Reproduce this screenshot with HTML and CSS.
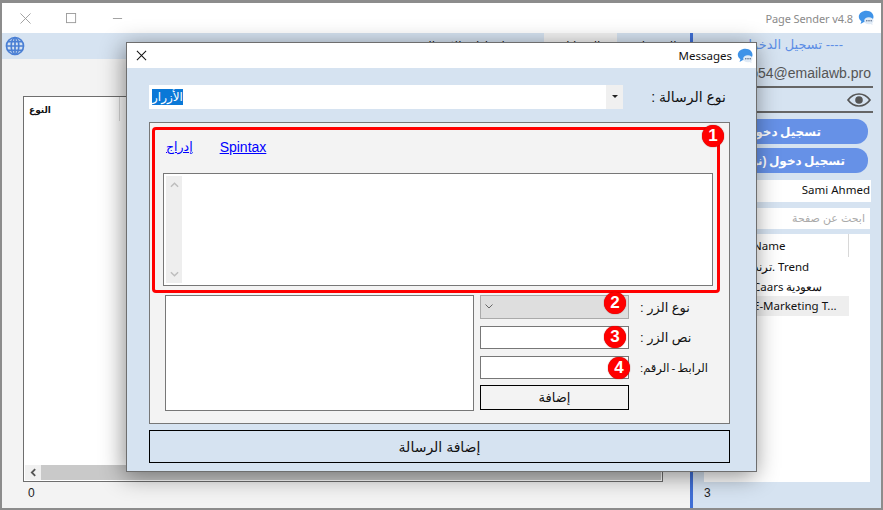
FILE: index.html
```html
<!DOCTYPE html>
<html lang="ar">
<head>
<meta charset="utf-8">
<title>Page Sender</title>
<link rel="stylesheet" href="styles.css">
</head>
<body>
<svg class="defs" width="0" height="0" aria-hidden="true">
  <symbol id="chat" viewBox="0 0 16 16">
    <path d="M8.500 .8C4.300 .8 .8 3.400 .8 6.800c0 1.800 1 3.400 2.600 4.500L2.500 14l3.500-1.900c.8.200 1.600.300 2.500.300 4.200 0 7-2.500 7-5.600S12.700 .8 8.500 .8z" fill="#3f93e8"/>
    <path d="M10.800 7.300c-2.600 0-4.600 1.500-4.600 3.500s2 3.400 4.600 3.400c.5 0 1-.1 1.500-.2l2.400 1.100-.5-2.100c.8-.6 1.300-1.400 1.300-2.200 0-2-2-3.500-4.700-3.500z" fill="#dfeaf6"/>
    <circle cx="8.800" cy="10.800" r=".8" fill="#5d6f8a"/><circle cx="11" cy="10.800" r=".8" fill="#5d6f8a"/><circle cx="13.200" cy="10.800" r=".8" fill="#5d6f8a"/>
  </symbol>
</svg>
<div class="app">
  <header class="titlebar">
    <div class="controls">
      <svg class="ctl" viewBox="0 0 12 12"><path d="M.5.500l11 11M11.500.500l-11 11" stroke="#9a9a9a" fill="none"/></svg>
      <svg class="ctl" viewBox="0 0 12 12"><rect x=".5" y=".5" width="10" height="10" stroke="#9a9a9a" fill="none"/></svg>
      <svg class="ctl" viewBox="0 0 12 12"><path d="M1 6h10" stroke="#9a9a9a" fill="none"/></svg>
    </div>
    <div class="apptitle"><span>Page Sender v4.8</span><svg class="chat"><use href="#chat"/></svg></div>
  </header>
  <div class="main">
    <section class="left">
      <div class="strip">
        <svg class="globe" viewBox="0 0 20 20"><g fill="none" stroke="#4a7fd4" stroke-width="1.700"><circle cx="10" cy="10" r="8.500"/><ellipse cx="10" cy="10" rx="3.800" ry="8.500"/><path d="M10 1.500v17M1.500 10h17M2.800 5.700h14.400M2.800 14.300h14.400"/></g></svg>
        <div class="tabs">
          <span class="tab">إعدادات الإرسال</span>
          <span class="tab active">الرسائل</span>
          <span class="tab">الصفحات</span>
        </div>
      </div>
      <div class="content">
        <div class="table">
          <div class="thead"><span class="th">النوع</span></div>
          <div class="tbody"></div>
          <div class="hscroll"><span class="arrow"><svg viewBox="0 0 8 8"><path d="M5.500 1L2.500 4l3 3" fill="none" stroke="#555" stroke-width="1.600"/></svg></span></div>
        </div>
        <div class="count count-left">0</div>
      </div>
    </section>
    <div class="divider"></div>
    <aside class="right">
      <div class="login-link">---- تسجيل الدخول</div>
      <div class="email">sp54@emailawb.pro</div>
      <div class="pass">
        <svg class="eye" viewBox="0 0 24 14"><path d="M1 7c3-4 7-6 11-6s8 2 11 6c-3 4-7 6-11 6S4 11 1 7z" fill="none" stroke="#555" stroke-width="1.700"/><circle cx="12" cy="7" r="3.800" fill="#555"/></svg>
      </div>
      <button class="pill pill-a">تسجيل دخول</button>
      <button class="pill pill-b">تسجيل دخول (نوع)</button>
      <div class="userbox">Sami Ahmed</div>
      <div class="searchbox">ابحث عن صفحة</div>
      <div class="pagelist">
        <div class="plhead"><span>Name</span></div>
        <div class="plrow">ترند. Trend</div>
        <div class="plrow">Caars سعودية</div>
        <div class="plrow sel">E-Marketing T...</div>
      </div>
      <div class="count">3</div>
    </aside>
  </div>

  <div class="modal">
    <div class="mtitle">
      <svg class="mclose" viewBox="0 0 12 12"><path d="M1 1l10 10M11 1L1 11" stroke="#111" stroke-width="1.100" fill="none"/></svg>
      <div class="mname"><span>Messages</span><svg class="chat"><use href="#chat"/></svg></div>
    </div>
    <div class="mbody">
      <div class="typerow">
        <div class="combo">
          <span class="seltext">الأزرار</span>
          <span class="combo-btn"></span>
        </div>
        <label class="typelabel">نوع الرسالة :</label>
      </div>
      <div class="group">
        <div class="redframe">
          <span class="badge b1">1</span>
          <div class="links"><a class="link-ar" href="#">إدراج</a><a href="#">Spintax</a></div>
          <div class="textarea">
            <div class="vscroll">
              <svg viewBox="0 0 10 6"><path d="M1 5l4-4 4 4" fill="none" stroke="#bdbdbd" stroke-width="1.600"/></svg>
              <svg viewBox="0 0 10 6"><path d="M1 1l4 4 4-4" fill="none" stroke="#bdbdbd" stroke-width="1.600"/></svg>
            </div>
          </div>
        </div>
        <div class="btnform">
          <div class="listbox"></div>
          <div class="fields">
            <div class="field"><div class="input disabled"><svg class="chev" viewBox="0 0 8 5"><path d="M.5.500L4 4 7.500.500" fill="none" stroke="#666"/></svg><span class="badge b2">2</span></div><label>نوع الزر :</label></div>
            <div class="field"><div class="input"><span class="badge b3">3</span></div><label>نص الزر :</label></div>
            <div class="field"><div class="input"><span class="badge b4">4</span></div><label class="label-tight">الرابط - الرقم:</label></div>
            <div class="field"><button class="addbtn">إضافة</button></div>
          </div>
        </div>
      </div>
      <button class="addmsg">إضافة الرسالة</button>
    </div>
  </div>
</div>
</body>
</html>
```
FILE: styles.css
```css
* { box-sizing: border-box; }
html, body { margin: 0; padding: 0; background: #fff; }
body { font-family: "Liberation Sans", "DejaVu Sans", sans-serif; color: #111; overflow: hidden; }
.defs { position: absolute; }
.app {
  position: relative; width: 883px; height: 510px; display: flex; flex-direction: column;
  border: 2px solid #8c8c8c; border-top-width: 3px; background: #f3f3f3; overflow: hidden;
}
.titlebar { height: 30px; flex: none; background: #fff; display: flex; justify-content: space-between; align-items: center; }
.controls { display: flex; align-items: center; gap: 35px; padding-left: 18px; }
.ctl { width: 11px; height: 11px; display: block; }
.apptitle { display: flex; align-items: center; gap: 5px; padding-right: 7px; font: 11px "Noto Sans", sans-serif; color: #8a8a8a; letter-spacing: -.1px; }
.chat { width: 16px; height: 16px; display: block; }
.main { flex: 1; display: flex; min-height: 0; }
.left { width: 688px; flex: none; display: flex; flex-direction: column; background: #f3f3f3; }
.strip { height: 26px; flex: none; background: #d6e3f1; display: flex; justify-content: space-between; align-items: center; padding-left: 3px; }
.globe { width: 20px; height: 20px; display: block; }
.tabs { display: flex; height: 100%; font-size: 12px; }
.tab { width: 73px; padding-top: 6px; text-align: center; white-space: nowrap; }
.tab:first-child { width: 160px; }
.tab.active { background: #f3f3f3; }
.content { flex: 1; display: flex; flex-direction: column; padding: 37px 0 0 21px; min-height: 0; }
.table { width: 640px; height: 386px; flex: none; background: #fff; border: 1px solid #6e6e6e; display: flex; flex-direction: column; }
.thead { height: 24px; flex: none; width: 96px; border-right: 1px solid #d8d8d8; padding: 8px 0 0 5px; font-size: 9px; }
.th { font-weight: bold; }
.tbody { flex: 1; }
.hscroll { height: 15px; flex: none; margin: 0 1px 1px; background: #c9c9c9; display: flex; }
.arrow { width: 16px; background: #f0f0f0; display: flex; align-items: center; justify-content: center; }
.arrow svg { width: 9px; height: 9px; display: block; }
.count { font-size: 12px; line-height: 14px; padding-top: 4px; color: #222; }
.count-left { padding-left: 5px; }
.divider { width: 3px; flex: none; background: #3f6fd6; }
.right { flex: 1; min-width: 0; background: #d6e3f1; display: flex; flex-direction: column; align-items: flex-end; padding: 3px 8px 0 11px; }
.login-link { font-size: 13px; color: #5c8ee6; padding-right: 30px; padding-top: 1px; height: 18px; direction: rtl; white-space: nowrap; }
.email { font-size: 14px; color: #555; margin-top: 10px; margin-right: 2px; height: 18px; white-space: nowrap; line-height: 18px; }
.pass { width: 116px; height: 27px; margin-top: 4px; flex: none; border-top: 2px solid #666; border-bottom: 2px solid #666; display: flex; justify-content: flex-end; align-items: center; padding-right: 2px; }
.eye { width: 24px; height: 14px; display: block; }
.pill { width: 130px; height: 25px; flex: none; margin-right: 5px; border: 0; border-radius: 12px; background: #6691e7; color: #fff; font: bold 12px "Liberation Sans", "DejaVu Sans", sans-serif; word-spacing: -1px; text-align: right; direction: rtl; white-space: nowrap; }
.pill-a { margin-top: 6px; padding: 0 47px 0 0; }
.pill-b { margin-top: 4px; padding: 0 23px 0 0; }
.userbox { width: 140px; height: 22px; flex: none; margin-top: 7px; margin-right: 2px; background: #fff; font: 11.500px/20px "Noto Sans", sans-serif; text-align: right; padding-right: 1px; }
.searchbox { width: 140px; height: 21px; flex: none; margin-top: 6px; margin-right: 3px; background: #fff; font-size: 11px; line-height: 20px; color: #aaa; text-align: right; padding-right: 5px; direction: rtl; }
.pagelist { width: 166px; height: 248px; margin-top: 5px; margin-right: 3px; flex: none; background: #fff; font: 11.500px "Noto Sans", sans-serif; padding-left: 34px; }
.plhead { height: 23px; width: 111px; border-right: 1px solid #d8d8d8; padding: 4px 0 0 15px; margin-bottom: 0; }
.plrow { height: 19.500px; width: 111px; line-height: 20px; padding-left: 15px; white-space: nowrap; overflow: hidden; }
.plrow.sel { background: #eeeeee; }
.right .count { align-self: flex-start; }
.modal {
  position: absolute; left: 124px; top: 39px; width: 631px; height: 430px; background: #d6e3f1;
  border: 1.500px solid #6e6e6e; box-shadow: -2px 4px 22px rgba(0, 0, 0, .45); display: flex; flex-direction: column;
}
.mtitle { height: 25px; flex: none; background: #fff; display: flex; justify-content: space-between; align-items: center; padding-left: 9px; padding-right: 3px; }
.mclose { width: 11px; height: 11px; display: block; }
.mname { display: flex; align-items: center; gap: 5px; font: 11.500px "Noto Sans", sans-serif; }
.mbody { flex: 1; padding: 17px 26px 0 22px; display: flex; flex-direction: column; }
.typerow { display: flex; justify-content: space-between; align-items: center; height: 24px; }
.combo { width: 474px; height: 24px; background: #fff; display: flex; justify-content: space-between; align-items: center; padding-left: 3px; direction: ltr; }
.seltext { background: #0a78d7; color: #fff; font-size: 12px; line-height: 16px; height: 16px; }
.combo-btn { width: 17px; height: 24px; background: #f0f0f0; position: relative; }
.combo-btn::after { content: ""; position: absolute; left: 6px; top: 10px; border: 3px solid transparent; border-top: 3px solid #222; }
.typelabel { font-size: 14px; direction: rtl; white-space: nowrap; padding-right: 4px; }
.group { width: 581px; height: 302px; margin-top: 13px; flex: none; background: #f3f3f3; border: 1px solid #777; padding: 4px 0 0 2px; }
.redframe { position: relative; width: 568px; height: 166px; border: 3px solid #f00; border-radius: 4px; padding-left: 8px; background: #f3f3f3; }
.links { display: flex; gap: 27px; height: 43px; padding: 9px 0 0 3px; font-size: 14px; line-height: 16px; }
.links a { color: #00f; text-decoration: underline; }
.links .link-ar { font-size: 12.500px; }
.textarea { width: 550px; height: 113px; background: #fff; border: 1px solid #777; padding: 2px 0 2px 2px; }
.vscroll { width: 16px; height: 100%; background: #eee; display: flex; flex-direction: column; justify-content: space-between; align-items: center; padding: 6px 0; }
.vscroll svg { width: 9px; height: 6px; display: block; }
.badge {
  position: absolute; width: 22px; height: 22px; border-radius: 50%; background: #f00; color: #fff;
  font: bold 17px/22px "Liberation Sans", sans-serif; text-align: center; box-shadow: 0 0 1px #800;
}
.b1 { right: -7px; top: -5px; }
.btnform { display: flex; padding: 2px 0 0 13px; }
.listbox { width: 309px; height: 116px; background: #fff; border: 1px solid #777; flex: none; }
.fields { margin-left: 6px; display: flex; flex-direction: column; gap: 6.330px; }
.field { display: flex; align-items: center; height: 24px; }
.field label { font-size: 13px; direction: rtl; white-space: nowrap; margin-left: 11px; }
.field .label-tight { font-size: 11.500px; word-spacing: -1px; }
.input { position: relative; width: 149px; height: 23px; background: #fff; border: 1px solid #777; flex: none; }
.input.disabled { height: 24px; background: #dedede; border-color: #aaa; }
.chev { position: absolute; left: 4px; top: 8px; width: 8px; height: 5px; display: block; }
.b2 { right: 2px; top: -4px; }
.b3 { right: 2px; top: -1px; }
.b4 { right: -2px; top: 0; }
.addbtn { width: 149px; height: 25px; flex: none; background: #f3f3f3; border: 1px solid #000; font: 13px "Liberation Sans", "DejaVu Sans", sans-serif; padding: 0; color: #111; }
.addmsg { width: 581px; height: 33px; margin-top: 6px; flex: none; background: #d6e3f1; border: 1px solid #000; font: 14px "Liberation Sans", "DejaVu Sans", sans-serif; padding: 0; color: #111; }
```
